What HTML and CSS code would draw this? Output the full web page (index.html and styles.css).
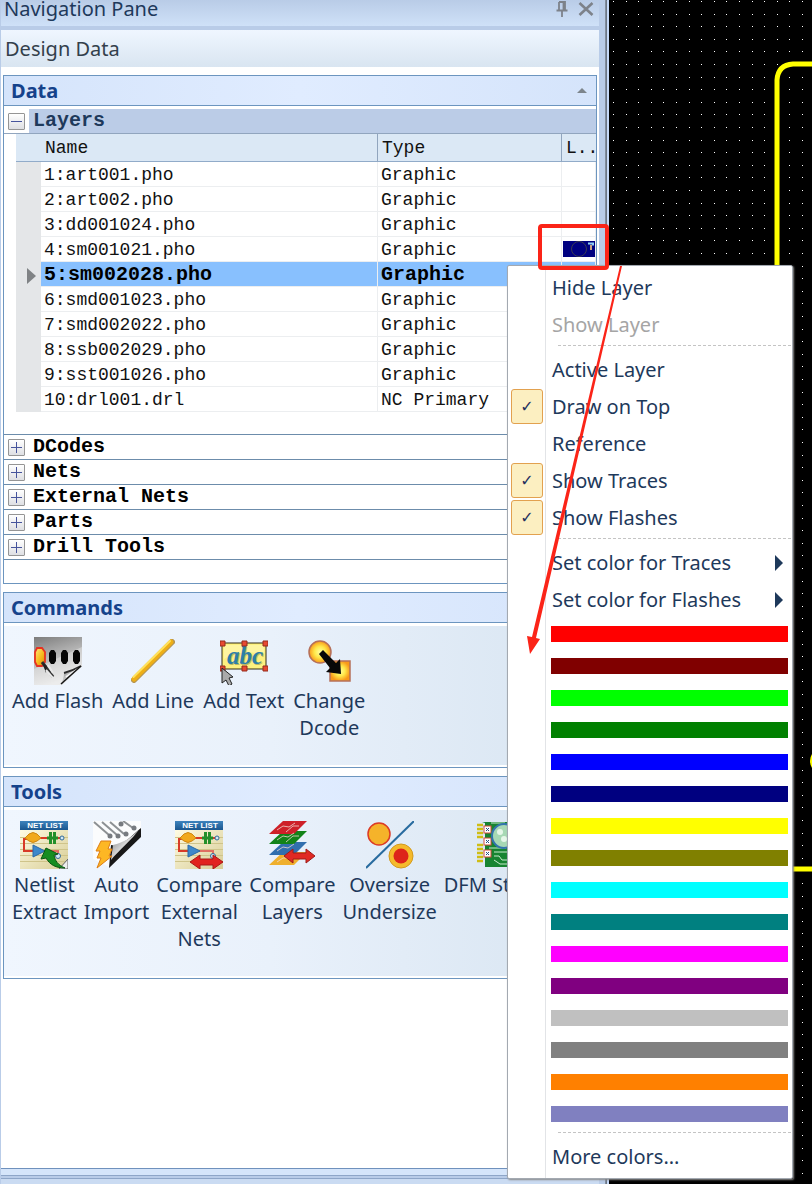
FILE: index.html
```html
<!DOCTYPE html>
<html lang="en">
<head>
    <meta charset="UTF-8">
    <title>Navigation Pane</title>
    <link rel="stylesheet" href="styles.css">
</head>
<body>
<div class="app">
    <div class="pane">
        <div class="pane-title">
            <span>Navigation Pane</span>
            <button class="icon-button" aria-label="Pin">
                <svg width="16" height="18" viewBox="0 0 16 18"><path d="M5 2h6v8M5 2v8M9.5 2v8M2.5 10.5h11M8 11v6" fill="none" stroke="#7d828a" stroke-width="1.8"/></svg>
            </button>
            <button class="icon-button" aria-label="Close">
                <svg width="16" height="18" viewBox="0 0 16 18"><path d="M1.500 3l13 12M14.5 3l-13 12" fill="none" stroke="#7d828a" stroke-width="2.6"/></svg>
            </button>
        </div>
        <div class="pane-caption">Design Data</div>

        <div class="pane-body">
            <section class="panel">
                <h2 class="panel-header">Data <span class="collapse"></span></h2>
                <div class="group open">
                    <button class="toggle" aria-label="Collapse Layers"><svg width="15" height="15"><path d="M2 7.5h11" stroke="#46549c"/></svg></button>
                    <span class="group-name">Layers</span>
                </div>
                <table class="layers">
                    <thead>
                        <tr><th class="mark"></th><th>Name</th><th class="type">Type</th><th class="look">L..</th></tr>
                    </thead>
                    <tbody>
                        <tr><td class="mark"></td><td>1:art001.pho</td><td>Graphic</td><td></td></tr>
                        <tr><td class="mark"></td><td>2:art002.pho</td><td>Graphic</td><td></td></tr>
                        <tr><td class="mark"></td><td>3:dd001024.pho</td><td>Graphic</td><td></td></tr>
                        <tr><td class="mark"></td><td>4:sm001021.pho</td><td>Graphic</td><td class="swatch-cell">
                            <svg class="layer-swatch" width="32" height="16" viewBox="0 0 32 16">
                                <rect width="32" height="16" fill="#000080"/>
                                <circle cx="16" cy="8" r="7.5" fill="none" stroke="#3c3c50"/>
                                <path d="M25 2.5h5v2" fill="none" stroke="#8fd0f4" stroke-width="2"/>
                                <path d="M28 4v5" stroke="#c9a184" stroke-width="2"/>
                            </svg>
                        </td></tr>
                        <tr class="selected"><td class="mark"><svg width="9" height="16"><path d="M0 0l9 8-9 8z" fill="#7f8285"/></svg></td><td>5:sm002028.pho</td><td>Graphic</td><td></td></tr>
                        <tr><td class="mark"></td><td>6:smd001023.pho</td><td>Graphic</td><td></td></tr>
                        <tr><td class="mark"></td><td>7:smd002022.pho</td><td>Graphic</td><td></td></tr>
                        <tr><td class="mark"></td><td>8:ssb002029.pho</td><td>Graphic</td><td></td></tr>
                        <tr><td class="mark"></td><td>9:sst001026.pho</td><td>Graphic</td><td></td></tr>
                        <tr><td class="mark"></td><td>10:drl001.drl</td><td>NC Primary</td><td></td></tr>
                    </tbody>
                </table>
                <div class="group">
                    <button class="toggle" aria-label="Expand DCodes"><svg width="15" height="15"><path d="M2 7.5h11M7.5 2v11" stroke="#46549c"/></svg></button>
                    <span class="group-name">DCodes</span>
                </div>
                <div class="group">
                    <button class="toggle" aria-label="Expand Nets"><svg width="15" height="15"><path d="M2 7.5h11M7.5 2v11" stroke="#46549c"/></svg></button>
                    <span class="group-name">Nets</span>
                </div>
                <div class="group">
                    <button class="toggle" aria-label="Expand External Nets"><svg width="15" height="15"><path d="M2 7.5h11M7.5 2v11" stroke="#46549c"/></svg></button>
                    <span class="group-name">External Nets</span>
                </div>
                <div class="group">
                    <button class="toggle" aria-label="Expand Parts"><svg width="15" height="15"><path d="M2 7.5h11M7.5 2v11" stroke="#46549c"/></svg></button>
                    <span class="group-name">Parts</span>
                </div>
                <div class="group">
                    <button class="toggle" aria-label="Expand Drill Tools"><svg width="15" height="15"><path d="M2 7.5h11M7.5 2v11" stroke="#46549c"/></svg></button>
                    <span class="group-name">Drill Tools</span>
                </div>
                <div class="group empty"></div>
            </section>

            <section class="panel">
                <h2 class="panel-header">Commands</h2>
                <div class="tools commands">
                    <button class="tool">
                        <svg width="48" height="48" viewBox="0 0 48 48">
                            <defs>
                                <linearGradient id="steel" x1="0" y1="0" x2="1" y2="1"><stop offset="0" stop-color="#858585"/><stop offset=".3" stop-color="#aaa"/><stop offset=".6" stop-color="#efefef"/><stop offset="1" stop-color="#888"/></linearGradient>
                                <linearGradient id="steel2" x1="0" y1="0" x2="0.300" y2="1"><stop offset="0" stop-color="#7c7c7c"/><stop offset=".5" stop-color="#b8b8b8"/><stop offset="1" stop-color="#e4e4e4"/></linearGradient>
                                <linearGradient id="gold" x1="0" y1="0" x2="1" y2="1"><stop offset="0" stop-color="#ffe87c"/><stop offset=".5" stop-color="#f8bd22"/><stop offset="1" stop-color="#d88c00"/></linearGradient>
                            </defs>
                            <path d="M0 0h48v29L27 48H0z" fill="url(#steel2)"/>
                            <path d="M0 32L48 10v18L26 48H0z" fill="#fff" opacity=".3"/>
                            <path d="M3 11h5l3 4v10l-3 4H3l-2-4V15z" fill="url(#gold)" stroke="#e63221" stroke-width="1.8"/>
                            <path d="M17 13h3l2 3v8l-2 3h-3l-2-3v-8zM29 13h3l2 3v8l-2 3h-3l-2-3v-8zM41 13h3l2 3v8l-2 3h-3l-2-3v-8z" fill="#050505"/>
                            <path d="M8 25l11 15" stroke="#333" stroke-width="3"/>
                            <path d="M8 25l4 11 1-7z" fill="#222"/>
                            <path d="M12 33l7 8M14 28l5 8" stroke="#e8e8e8" stroke-width="2"/>
                            <path d="M27 47c2-4 3-7 3-11 5 0 10-4 18-7L28 48z" fill="url(#steel)"/>
                            <path d="M30 36q8-2 17-7" fill="none" stroke="#2c2c2c" stroke-width="2"/>
                            <path d="M32 40l12-8" stroke="#f4f4f4" stroke-width="2"/>
                            <path d="M27 47L47 29" stroke="#151515" stroke-width="1.5"/>
                        </svg>
                        <span>Add Flash</span>
                    </button>
                    <button class="tool">
                        <svg width="48" height="48" viewBox="0 0 48 48">
                            <path d="M5 43L43 5" stroke="#a06f0c" stroke-width="6" stroke-linecap="round" opacity=".7"/>
                            <path d="M5 42L42 5" stroke="#eeaf17" stroke-width="5" stroke-linecap="round"/>
                            <path d="M4.5 40L41 4" stroke="#ffe25c" stroke-width="2" stroke-linecap="round"/>
                        </svg>
                        <span>Add Line</span>
                    </button>
                    <button class="tool">
                        <svg width="48" height="48" viewBox="0 0 48 48">
                            <rect x="2" y="6" width="44" height="26" fill="#fdf17f" stroke="#332b14"/>
                            <path d="M4 8h40v10c-10-4-26-4-40 4z" fill="#fffac2" opacity=".5"/>
                            <text x="26" y="28" text-anchor="middle" class="abc abc-shade">abc</text>
                            <text x="25" y="27" text-anchor="middle" class="abc">abc</text>
                            <path d="M0 4h5v5H0zM22 4h5v5h-5zM43 4h5v5h-5zM0 29h5v5H0zM22 29h5v5h-5zM43 29h5v5h-5z" fill="#e84a32" stroke="#962b1c"/>
                            <path d="M2 31v15l4-3 3 6 3-2-3-6 4-1z" fill="#aaa" stroke="#222"/>
                        </svg>
                        <span>Add Text</span>
                    </button>
                    <button class="tool">
                        <svg width="48" height="48" viewBox="0 0 48 48">
                            <defs><radialGradient id="glow"><stop offset="0" stop-color="#ffffa0"/><stop offset=".5" stop-color="#ffe94b"/><stop offset="1" stop-color="#f99a19"/></radialGradient></defs>
                            <circle cx="15" cy="15" r="11" fill="url(#glow)" stroke="#b5705a" stroke-width="1.5"/>
                            <rect x="25" y="24" width="20" height="20" fill="url(#glow)" stroke="#b5705a" stroke-width="1.5"/>
                            <path d="M14 17l4-4 13 13 4-4 1 15-15-2 4-4z" fill="#080808"/>
                        </svg>
                        <span>Change<br>Dcode</span>
                    </button>
                </div>
            </section>

            <section class="panel">
                <h2 class="panel-header">Tools</h2>
                <div class="tools utilities">
                    <button class="tool">
                        <svg width="48" height="48" viewBox="0 0 48 48">
                            <defs>
                                <linearGradient id="banner" x1="0" y1="0" x2="0" y2="1"><stop offset="0" stop-color="#3d83bd"/><stop offset="1" stop-color="#1a568f"/></linearGradient>
                                <linearGradient id="paper" x1="0" y1="0" x2="1" y2="1"><stop offset="0" stop-color="#fffce4"/><stop offset="1" stop-color="#d8cd96"/></linearGradient>
                                <g id="netlist">
                                    <rect y="8" width="48" height="40" fill="url(#paper)"/>
                                    <path d="M0 16.5h48M0 22.5h48M0 28.5h48M0 34.5h48M0 40.5h48" stroke="#cfc48a"/>
                                    <rect width="48" height="9" fill="url(#banner)"/>
                                    <text x="25" y="7" text-anchor="middle" class="banner-text">NET LIST</text>
                                    <path d="M8 18H4v12h9M18 17h22" fill="none" stroke="#d83b27" stroke-width="2"/>
                                    <path d="M24 30h14v4" fill="none" stroke="#df6e61" stroke-width="2"/>
                                    <path d="M5 17l4-4q4-3 8 0l4 4-4 3q-4 3-8 0z" fill="#f1a91c" stroke="#ce8710"/>
                                    <path d="M30.5 11v12M34.5 11v12M27 17h11" stroke="#23902b" stroke-width="3"/>
                                    <circle cx="42" cy="17" r="2" fill="#d4e9f5" stroke="#326a99"/>
                                    <circle cx="38" cy="35" r="2.5" fill="#d4e9f5" stroke="#326a99"/>
                                    <path d="M13 24l12 6-12 6z" fill="#3d88cb" stroke="#2869a7"/>
                                </g>
                            </defs>
                            <use href="#netlist"/>
                            <path d="M39 48l9-10v10z" fill="#eee" stroke="#666"/>
                            <path d="M26 27l-5 11 5-1c4 7 10 10 19 10-7-3-10-7-11-13l4-1z" fill="#168d22" stroke="#0a5610"/>
                        </svg>
                        <span>Netlist<br>Extract</span>
                    </button>
                    <button class="tool">
                        <svg width="48" height="48" viewBox="0 0 48 48">
                            <path d="M0 0h48v10L16 46 0 38z" fill="#fbfcfd"/>
                            <path d="M1 1l15 13M9 1l15 13M17 1l14 12M30 0l10 7" stroke="#8d9194" stroke-width="2"/>
                            <g fill="#777b80"><circle cx="17" cy="15" r="2.5"/><circle cx="25" cy="15" r="2.5"/><circle cx="33" cy="13" r="2.5"/><circle cx="41" cy="7" r="2.500"/><circle cx="28" cy="3" r="2.5"/></g>
                            <path d="M48 7v9L16 47l2-23c10 3 20-9 30-17z" fill="#181818"/>
                            <path d="M48 6c-6 9-18 16-28 18l-2 15C25 30 39 19 48 6z" fill="url(#steel)"/>
                            <path d="M8 20h10l-3 8h4l-3 7h3L4 47l4-10H4l3-7H3z" fill="#fdb724" stroke="#de7d13"/>
                        </svg>
                        <span>Auto<br>Import</span>
                    </button>
                    <button class="tool">
                        <svg width="48" height="48" viewBox="0 0 48 48">
                            <use href="#netlist"/>
                            <path d="M15 41l10-7v4h13v-4l10 7-10 7v-4H25v4z" fill="#e1231f" stroke="#a91818"/>
                        </svg>
                        <span>Compare<br>External<br>Nets</span>
                    </button>
                    <button class="tool">
                        <svg width="48" height="48" viewBox="0 0 48 48">
                            <path d="M15 31h24L26 44H1z" fill="#efb02e"/>
                            <path d="M15 21h24L26 34H1z" fill="#316fae"/>
                            <path d="M15 10h24L26 23H1z" fill="#128319"/>
                            <path d="M15 0h24L26 13H1z" fill="#ce2029"/>
                            <path d="M9 9l6-4 6 1 6-4M18 11l7-6h6M9 19l6-4 5 1 6-4M18 21l7-6h6M9 30l6-4 5 1 6-4M9 41l6-4h6" fill="none" stroke="#f0d9d2" stroke-width=".8"/>
                            <path d="M16 35l9-7v4h13v-4l9 7-9 7v-4H25v4z" fill="#e02924" stroke="#9e1c19"/>
                        </svg>
                        <span>Compare<br>Layers</span>
                    </button>
                    <button class="tool">
                        <svg width="48" height="48" viewBox="0 0 48 48">
                            <path d="M0 47L48 0" stroke="#286b9f" stroke-width="2"/>
                            <circle cx="13" cy="13" r="11" fill="#f5b32a" stroke="#dc3b25" stroke-width="1.5"/>
                            <circle cx="35" cy="35" r="12" fill="#f5ba2b" stroke="#d29a20"/>
                            <circle cx="35" cy="35" r="7.5" fill="#dd241a"/>
                        </svg>
                        <span>Oversize<br>Undersize</span>
                    </button>
                    <button class="tool">
                        <svg width="48" height="48" viewBox="0 0 48 48">
                            <path d="M5 1h43v45H8V2z" fill="#178431"/>
                            <path d="M0 4h6M0 8h6M0 12h6M0 16h6M0 24h6M0 28h6M0 32h6M0 36h6M0 40h6" stroke="#cfbd13" stroke-width="2.5"/>
                            <path d="M14 2h14M12 27h17M17 31h13M17 35h5l3 4h9M17 39l6 4h10" fill="none" stroke="#c8ebcd"/>
                            <g fill="#fff" stroke="#d44c3c"><rect x="7" y="5" width="7" height="7"/><rect x="7" y="17" width="7" height="7"/><rect x="7" y="29" width="7" height="7"/></g>
                            <path d="M9 7l3 3m0-3l-3 3M9 19l3 3m0-3l-3 3M9 31l3 3m0-3l-3 3" stroke="#2b4e82"/>
                            <circle cx="27" cy="15" r="12" fill="#a7d8b4" stroke="#3274ae" stroke-width="2"/>
                            <circle cx="23" cy="11" r="3" fill="#e6f7e9"/><circle cx="27" cy="18" r="3" fill="#e6f7e9"/>
                        </svg>
                        <span>DFM Stream</span>
                    </button>
                </div>
            </section>
        </div>
        <div class="pane-footer"></div>
    </div>

    <div class="canvas">
        <svg class="board" width="100%" height="100%">
            <defs>
                <pattern id="grid" x="4" y="1" width="63" height="63" patternUnits="userSpaceOnUse">
                    <g id="dot-row" fill="#fff">
                        <path d="M0 0h1v1H0zM13 0h1v1h-1zM25 0h1v1h-1zM38 0h1v1h-1zM50 0h1v1h-1z"/>
                    </g>
                    <use href="#dot-row" y="13"/><use href="#dot-row" y="25"/><use href="#dot-row" y="38"/><use href="#dot-row" y="50"/>
                </pattern>
            </defs>
            <rect width="100%" height="100%" fill="url(#grid)"/>
            <path d="M300 64H184q-15 1-16 16v789h132" fill="none" stroke="#ff0" stroke-width="5"/>
            <circle cx="214" cy="761" r="11" fill="none" stroke="#ff0" stroke-width="4"/>
        </svg>
    </div>

    <div class="menu">
        <button class="menu-item">Hide Layer</button>
        <button class="menu-item" disabled>Show Layer</button>
        <hr>
        <button class="menu-item">Active Layer</button>
        <label class="menu-item"><input type="checkbox" checked>Draw on Top</label>
        <button class="menu-item">Reference</button>
        <label class="menu-item"><input type="checkbox" checked>Show Traces</label>
        <label class="menu-item"><input type="checkbox" checked>Show Flashes</label>
        <hr>
        <button class="menu-item submenu">Set color for Traces</button>
        <button class="menu-item submenu">Set color for Flashes</button>
        <button class="color red" aria-label="Red"></button>
        <button class="color maroon" aria-label="Maroon"></button>
        <button class="color lime" aria-label="Lime"></button>
        <button class="color green" aria-label="Green"></button>
        <button class="color blue" aria-label="Blue"></button>
        <button class="color navy" aria-label="Navy"></button>
        <button class="color yellow" aria-label="Yellow"></button>
        <button class="color olive" aria-label="Olive"></button>
        <button class="color cyan" aria-label="Cyan"></button>
        <button class="color teal" aria-label="Teal"></button>
        <button class="color magenta" aria-label="Magenta"></button>
        <button class="color purple" aria-label="Purple"></button>
        <button class="color silver" aria-label="Silver"></button>
        <button class="color gray" aria-label="Gray"></button>
        <button class="color orange" aria-label="Orange"></button>
        <button class="color lavender" aria-label="Lavender"></button>
        <hr>
        <button class="menu-item">More colors...</button>
    </div>

    <!-- callout: box on the layer swatch, arrow down to the palette -->
    <div class="callout-box"></div>
    <svg class="callout-arrow" width="100" height="390" viewBox="0 0 100 390">
        <path d="M97 1h2L13 373l4 1-10 15-3-18 5 1z" fill="#fb2418"/>
    </svg>
</div>
</body>
</html>
```
FILE: styles.css
```css
* {
    box-sizing: border-box;
}
body {
    margin: 0;
    background: #000;
    color: #1e395b;
    font-family: "Noto Sans", "Open Sans", sans-serif;
    font-size: 20px;
    line-height: 27px;
}
button {
    margin: 0;
    padding: 0;
    border: 0;
    background: none;
    color: inherit;
    font: inherit;
}
svg {
    display: block;
}
.app {
    position: relative;
    display: grid;
    grid-template-columns: 3fr 1fr;
    height: 100vh;
    min-height: 1184px;
    overflow: hidden;
}

/* navigation pane */
.pane {
    display: flex;
    flex-direction: column;
    min-width: 0;
    padding: 0 10px 0 1px;
    background: linear-gradient(to left, #c6dafa 2px, #626d7c 2px, #8d98a8 4px, #b9cce8 4px);
}
.pane-title {
    display: flex;
    align-items: flex-start;
    gap: 8px;
    height: 26px;
    padding: 0 5px 0 3px;
    background: linear-gradient(#b9cce7, #cfe1f8);
    line-height: 18px;
}
.pane-title span {
    flex: 1;
}
.pane-caption {
    margin-top: 4px;
    padding: 5px 4px;
    background: linear-gradient(#eff6ff, #d9e5f1);
    color: #333f4c;
}
.pane-body {
    flex: 1;
    padding: 8px 2px;
    background: #fff;
}
.pane-footer {
    height: 16px;
    border-top: 1px solid #6f91bd;
    background: linear-gradient(#d5e5fa 6px, #8ea6c8 6px, #8ea6c8 7px, #b9cce8 7px, #b9cce8 9px, #8ea6c8 9px, #8ea6c8 10px, #cadbf2 10px);
}
.panel {
    margin-bottom: 8px;
    border: 1px solid #6c95bf;
    background: #fff;
    overflow: hidden;
}
.panel-header {
    display: flex;
    align-items: center;
    justify-content: space-between;
    height: 30px;
    margin: 0 0 3px;
    padding: 0 9px 0 7px;
    border-bottom: 1px solid #6c95bf;
    background: linear-gradient(to right, #d5e4fb, #e0ecff 50%, #d5e4fb);
    color: #15428b;
    font-size: 20px;
}
.collapse {
    border: 5px solid transparent;
    border-top: 0;
    border-bottom: 5px solid #7d858c;
}

/* layer list */
.group {
    display: flex;
    align-items: center;
    gap: 4px;
    height: 25px;
    padding-left: 4px;
    border-top: 1px solid #6c8cab;
    color: #000;
    font: bold 20px/24px "Liberation Mono", monospace;
}
.group-name {
    flex: 1;
    padding-left: 4px;
}
.group.open {
    border-top: 0;
    border-bottom: 1px solid #91a5be;
    color: #1e395b;
}
.group.open .group-name {
    background: #bbcce7;
}
.toggle {
    width: 17px;
    height: 17px;
    border: 1px solid #959595;
    border-radius: 1px;
    background: linear-gradient(#fff, #dedfe3);
}
.layers {
    width: calc(100% - 12px);
    margin: 0 0 22px 12px;
    border-spacing: 0;
    table-layout: fixed;
    color: #111;
    font: 18px/22px "Liberation Mono", monospace;
}
.layers th {
    height: 28px;
    padding: 1px 0 0 4px;
    border-right: 1px solid #91a5be;
    border-bottom: 1px solid #91abc9;
    background: #dbe8f5;
    font-weight: normal;
    text-align: left;
}
.layers th:last-child {
    border-right: 0;
}
.layers .mark {
    width: 25px;
    padding: 2px 0 0 11px;
    border-right: 0;
}
.layers .type {
    width: 184px;
}
.layers .look {
    width: 34px;
}
.layers td {
    height: 25px;
    padding: 2px 0 0 3px;
    border-right: 1px solid #eceef0;
    border-bottom: 1px solid #eceef0;
}
.layers td.mark {
    border-bottom: 0;
    background: #e4e6e8;
}
.layers td.swatch-cell {
    padding: 0 0 0 1px;
}
.layers .selected td:not(.mark) {
    background: #88c0fe;
    color: #000;
    font-size: 20px;
    font-weight: bold;
}
.group.empty {
    height: 24px;
}

/* command buttons */
.tools {
    display: flex;
    align-items: flex-start;
    margin-bottom: 2px;
    padding: 11px 8px;
    background: linear-gradient(to right, #f0f6fe, #e9f1fb 45%, #dbe7f3 90%);
}
.commands {
    gap: 9px;
    min-height: 139px;
}
.utilities {
    gap: 7px;
    min-height: 166px;
}
.tool {
    flex: none;
    display: flex;
    flex-direction: column;
    align-items: center;
    gap: 2px;
}
.abc {
    fill: #2d7fa8;
    font: italic bold 25px "Liberation Serif", serif;
}
.abc-shade {
    fill: #b9b765;
}
.banner-text {
    fill: #fff;
    font: bold 8px "Liberation Sans", sans-serif;
}

/* board view */
.canvas {
    min-width: 0;
    overflow: hidden;
    background: #000;
}

/* context menu */
.menu {
    position: absolute;
    top: 265px;
    left: 507px;
    display: flex;
    flex-direction: column;
    width: 286px;
    padding: 3px 0;
    border: 1px solid #a3a9b1;
    border-radius: 2px;
    background: linear-gradient(to right, #fff 37px, #e2e4e7 37px, #e2e4e7 38px, #fff 38px);
    box-shadow: 1px 1px 2px #888;
}
.menu-item {
    display: flex;
    align-items: center;
    height: 37px;
    padding-left: 44px;
    text-align: left;
}
.menu-item:disabled {
    color: #a5a5a5;
}
.menu-item input {
    appearance: none;
    display: grid;
    place-items: center;
    width: 32px;
    height: 35px;
    margin: 0 9px 0 -41px;
    border: 1px solid #e2a14f;
    border-radius: 3px;
    background: #fcefc1;
}
.menu-item input:checked::before {
    content: "✓";
    color: #25305e;
    font: 16px "DejaVu Sans", sans-serif;
}
.submenu::after {
    content: "";
    margin: 0 9px 0 auto;
    border: 8px solid transparent;
    border-left-color: #1e395b;
    border-right: 0;
}
.menu hr {
    width: calc(100% - 51px);
    height: 1px;
    margin: 2px 1px 5px auto;
    border: 0;
    background: repeating-linear-gradient(to right, #c4c4c4 0, #c4c4c4 3px, #fff 3px, #fff 5px);
}
.color {
    height: 16px;
    margin: 8px 4px 8px 43px;
}
.red { background: #f00; }
.maroon { background: #800000; }
.lime { background: #0f0; }
.green { background: #008000; }
.blue { background: #00f; }
.navy { background: #000080; }
.yellow { background: #ff0; }
.olive { background: #808000; }
.cyan { background: #0ff; }
.teal { background: #008080; }
.magenta { background: #f0f; }
.purple { background: #800080; }
.silver { background: #c0c0c0; }
.gray { background: #808080; }
.orange { background: #ff8000; }
.lavender { background: #8080c0; }

/* callout */
.callout-box {
    position: absolute;
    top: 224px;
    left: 538px;
    width: 71px;
    height: 46px;
    border: 4px solid #fb2418;
    border-radius: 4px;
}
.callout-arrow {
    position: absolute;
    top: 265px;
    left: 523px;
    pointer-events: none;
}
```
